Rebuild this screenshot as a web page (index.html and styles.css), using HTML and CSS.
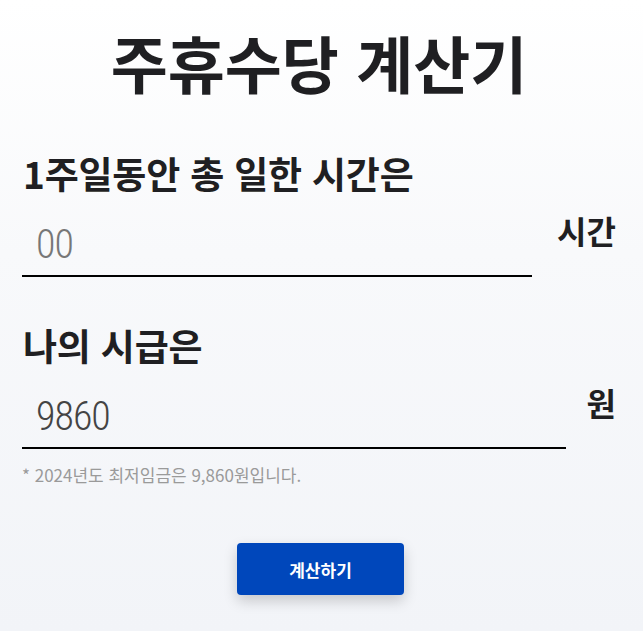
FILE: index.html
```html
<!DOCTYPE html>
<html lang="ko">
<head>
  <meta charset="utf-8">
  <link rel="stylesheet" href="styles.css">
  <title>주휴수당 계산기</title>
</head>
<body>
  <div class="page">
    <h1 class="title">주휴수당 계산기</h1>

    <div class="field">
      <label class="field-label" for="hours">1주일동안 총 일한 시간은</label>
      <div class="field-row">
        <input class="field-input field-input-short" type="text" id="hours" placeholder="00">
        <span class="field-unit">시간</span>
      </div>
    </div>

    <div class="field">
      <label class="field-label" for="wage">나의 시급은</label>
      <div class="field-row">
        <input class="field-input" type="text" id="wage" value="9860">
        <span class="field-unit">원</span>
      </div>
      <p class="field-note">* 2024년도 최저임금은 9,860원입니다.</p>
    </div>

    <div class="actions">
      <button class="calc-btn" id="calc-btn">계산하기</button>
    </div>
  </div>
</body>
</html>
```

FILE: styles.css
```css
body {
  margin: 0;
  padding: 0;
  min-height: 100vh;
  background: linear-gradient(to bottom, #ffffff 0%, #f8f9fb 40%, #f2f4f8 100%);
  font-family: "Noto Sans CJK KR", "Noto Sans", sans-serif;
  color: #1f1f22;
}

.page {
  padding: 24px 27px 0 22px;
}

.title {
  margin: 0;
  text-align: center;
  font-size: 62px;
  font-weight: 700;
  line-height: 76px;
}

.field {
  margin-top: 51px;
}

.field + .field {
  margin-top: 46px;
}

.field-label {
  display: block;
  padding-left: 1px;
  font-size: 37px;
  font-weight: 700;
  line-height: 44px;
  letter-spacing: -0.2px;
}

.field-row {
  display: flex;
  align-items: flex-start;
  gap: 21px;
  margin-top: 6px;
}

.field-input {
  flex: 1;
  min-width: 0;
  height: 76px;
  box-sizing: border-box;
  padding: 12px 14px 0;
  border: none;
  border-bottom: 2px solid #000;
  background: transparent;
  outline: none;
  font-family: "Roboto Condensed", Roboto, sans-serif;
  font-stretch: 75%;
  font-size: 40px;
  font-weight: 300;
  letter-spacing: -1px;
  color: #444;
}

.field-input-short {
  flex: 0 0 510px;
}

.field-input::placeholder {
  color: #777;
}

.field-unit {
  margin-left: auto;
  padding-top: 9px;
  font-size: 32px;
  font-weight: 700;
  line-height: 40px;
}

.field-note {
  margin: 13px 0 0;
  font-size: 17px;
  color: #9a9a9a;
}

.actions {
  display: flex;
  justify-content: center;
  margin-top: 56px;
  padding-left: 3px;
}

.calc-btn {
  width: 167px;
  height: 52px;
  border: none;
  border-radius: 4px;
  background-color: #0047bb;
  color: #fff;
  font-family: "Noto Sans CJK KR", sans-serif;
  font-size: 17px;
  font-weight: 700;
  box-shadow: 0 6px 14px rgba(0, 0, 0, 0.18);
  cursor: pointer;
}
```
